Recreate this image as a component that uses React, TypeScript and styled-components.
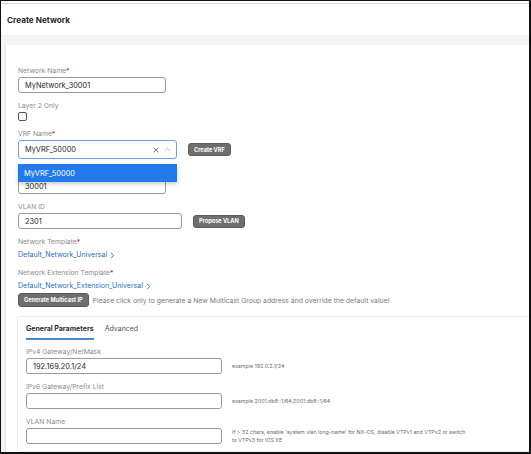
import styled, { createGlobalStyle } from "styled-components";

const GlobalStyle = createGlobalStyle`
  html, body {
    margin: 0;
    padding: 0;
    background: #fff;
  }
  body {
    font-family: Inter, "Noto Sans", "Liberation Sans", sans-serif;
    color: #333;
  }
  * {
    box-sizing: border-box;
  }
`;

const ChevronRight = () => (
  <svg width="5" height="7" viewBox="0 0 5 7" fill="none">
    <path d="M1 0.8 L3.8 3.5 L1 6.2" stroke="#2d6fc0" strokeWidth="0.9" />
  </svg>
);

const ClearIcon = () => (
  <svg width="6" height="6" viewBox="0 0 6 6" fill="none">
    <path d="M0.6 0.6 L5.4 5.4 M5.4 0.6 L0.6 5.4" stroke="#666" strokeWidth="0.9" />
  </svg>
);

const ChevronUp = () => (
  <svg width="7" height="5" viewBox="0 0 7 5" fill="none">
    <path d="M0.8 4 L3.5 1.2 L6.2 4" stroke="#b5b5b5" strokeWidth="0.8" />
  </svg>
);

const App = () => {
  return (
    <>
      <GlobalStyle />
      <Frame>
        <Header>Create Network</Header>
        <Body>
          <Panel>
            <Field>
              <Label>
                Network Name<Req>*</Req>
              </Label>
              <TextInput width={148}>MyNetwork_30001</TextInput>
            </Field>

            <Field>
              <Label>Layer 2 Only</Label>
              <Checkbox />
            </Field>

            <Field>
              <Label>
                VRF Name<Req>*</Req>
              </Label>
              <Row>
                <SelectBox>
                  <span>MyVRF_50000</span>
                  <SelectIcons>
                    <ClearIcon />
                    <ChevronUp />
                  </SelectIcons>
                  <Menu>
                    <MenuOption>MyVRF_50000</MenuOption>
                  </Menu>
                </SelectBox>
                <GrayButton>Create VRF</GrayButton>
              </Row>
            </Field>

            {/* label of this field is hidden under the open menu */}
            <Field>
              <LabelSpacer />
              <TextInput width={148}>30001</TextInput>
            </Field>

            <Field>
              <Label>VLAN ID</Label>
              <Row>
                <TextInput width={164}>2301</TextInput>
                <GrayButton>Propose VLAN</GrayButton>
              </Row>
            </Field>

            <Field>
              <Label>
                Network Template<Req>*</Req>
              </Label>
              <Link>
                Default_Network_Universal <ChevronRight />
              </Link>
            </Field>

            <Field>
              <Label>
                Network Extension Template<Req>*</Req>
              </Label>
              <Link>
                Default_Network_Extension_Universal <ChevronRight />
              </Link>
              <MulticastRow>
                <GrayButton>Generate Multicast IP</GrayButton>
                <Note>
                  Please click only to generate a New Multicast Group address
                  and override the default value!
                </Note>
              </MulticastRow>
            </Field>

            <TabCard>
              <TabBar>
                <Tab active>General Parameters</Tab>
                <Tab>Advanced</Tab>
              </TabBar>

              <TabField first>
                <Label>IPv4 Gateway/NetMask</Label>
                <Row>
                  <TextInput width={196}>192.169.20.1/24</TextInput>
                  <Helper>example 192.0.2.1/24</Helper>
                </Row>
              </TabField>

              <TabField>
                <Label>IPv6 Gateway/Prefix List</Label>
                <Row>
                  <TextInput width={196} />
                  <Helper>example 2001:db8::1/64,2001:db8::1/64</Helper>
                </Row>
              </TabField>

              <TabField>
                <Label>VLAN Name</Label>
                <Row>
                  <TextInput width={196} />
                  <Helper>
                    If &gt; 32 chars, enable 'system vlan long-name' for NX-OS,
                    disable VTPv1 and VTPv2 or switch
                    <br />
                    to VTPv3 for IOS XE
                  </Helper>
                </Row>
              </TabField>
            </TabCard>
          </Panel>
        </Body>
      </Frame>
    </>
  );
};

export default App;

const Frame = styled.div`
  width: 531px;
  height: 454px;
  border: 1px solid #111;
  border-width: 1px 2px 2px 1px;
  background: #fff;
  overflow: hidden;
  display: flex;
  flex-direction: column;
`;

const Header = styled.div`
  margin-top: 2px;
  height: 32px;
  border-top: 1px solid #dcdcdc;
  padding-left: 6px;
  display: flex;
  align-items: center;
  font-size: 8.2px;
  font-weight: 700;
  color: #2a2a2a;
  flex-shrink: 0;
`;

const Body = styled.div`
  flex: 1;
  background: #f4f4f4;
  padding: 10px 0 0 4px;
  display: flex;
`;

const Panel = styled.div`
  flex: 1;
  background: #fff;
  border-left: 1px solid #e4e4e4;
  padding: 13px 0 0 12px;
  display: flex;
  flex-direction: column;
`;

const Field = styled.div`
  margin-top: 8px;
  display: flex;
  flex-direction: column;
  align-items: flex-start;
`;

const Label = styled.div`
  font-size: 6.8px;
  line-height: 10px;
  color: #8c8c8c;
  margin-bottom: 1px;
`;

const LabelSpacer = styled.div`
  height: 11px;
`;

const Req = styled.span`
  color: #d0021b;
`;

const Row = styled.div`
  display: flex;
  align-items: center;
  gap: 11px;
`;

const TextInput = styled.div<{ width: number }>`
  width: ${(p) => p.width}px;
  height: 16px;
  border: 1px solid #9a9a9a;
  border-radius: 3px;
  padding-left: 6px;
  display: flex;
  align-items: center;
  font-size: 7.4px;
  color: #2a2a2a;
  background: #fff;
`;

const Checkbox = styled.span`
  width: 9px;
  height: 9px;
  border: 1px solid #555;
  border-radius: 2px;
  background: #fff;
`;

const SelectBox = styled.div`
  position: relative;
  width: 159px;
  height: 19px;
  border: 1px solid #6f9fe4;
  border-radius: 3px;
  padding: 0 5px 0 6px;
  display: flex;
  align-items: center;
  justify-content: space-between;
  font-size: 7.4px;
  color: #2a2a2a;
`;

const SelectIcons = styled.div`
  display: flex;
  align-items: center;
  gap: 5px;
`;

const Menu = styled.div`
  position: absolute;
  top: 23px;
  left: -1px;
  width: 159px;
  background: #fff;
  box-shadow: 0 2px 4px rgba(0, 0, 0, 0.2);
  z-index: 2;
`;

const MenuOption = styled.div`
  height: 18px;
  background: #2179ec;
  color: #fff;
  font-size: 7.4px;
  padding-left: 6px;
  display: flex;
  align-items: center;
`;

const GrayButton = styled.span`
  height: 13px;
  padding: 0 5px;
  border-radius: 3px;
  background: #6e6e6e;
  border: 1px solid #5c5c5c;
  color: #fff;
  font-size: 5.6px;
  font-weight: 700;
  display: inline-flex;
  align-items: center;
  white-space: nowrap;
`;

const Link = styled.div`
  margin-top: 2px;
  font-size: 7px;
  line-height: 10px;
  color: #2d6fc0;
  display: flex;
  align-items: center;
  gap: 3px;
`;

const MulticastRow = styled.div`
  margin-top: 2px;
  display: flex;
  align-items: center;
  gap: 4px;

  ${GrayButton} {
    height: 14px;
  }
`;

const Note = styled.span`
  font-size: 6.85px;
  color: #7a7a7a;
  white-space: nowrap;
`;

const TabCard = styled.div`
  margin: 9px 0 0 -1px;
  flex: 1;
  border: 1px solid #ececec;
  border-right: none;
  border-radius: 4px 0 0 4px;
  padding: 0 0 0 8px;
  display: flex;
  flex-direction: column;
`;

const TabBar = styled.div`
  display: flex;
  gap: 11px;
  padding-top: 6px;
`;

const Tab = styled.div<{ active?: boolean }>`
  font-size: 7px;
  line-height: 12px;
  padding-bottom: 3px;
  font-weight: ${(p) => (p.active ? 700 : 400)};
  color: ${(p) => (p.active ? "#2e2e2e" : "#555")};
  border-bottom: 2px solid ${(p) => (p.active ? "#4a86c8" : "transparent")};
`;

const TabField = styled.div<{ first?: boolean }>`
  margin-top: ${(p) => (p.first ? 7 : 8)}px;
  display: flex;
  flex-direction: column;

  ${Row} {
    gap: 10px;
    align-items: center;
  }
`;

const Helper = styled.div`
  font-size: 5.3px;
  line-height: 8px;
  color: #6a6a6a;
  white-space: nowrap;
`;
